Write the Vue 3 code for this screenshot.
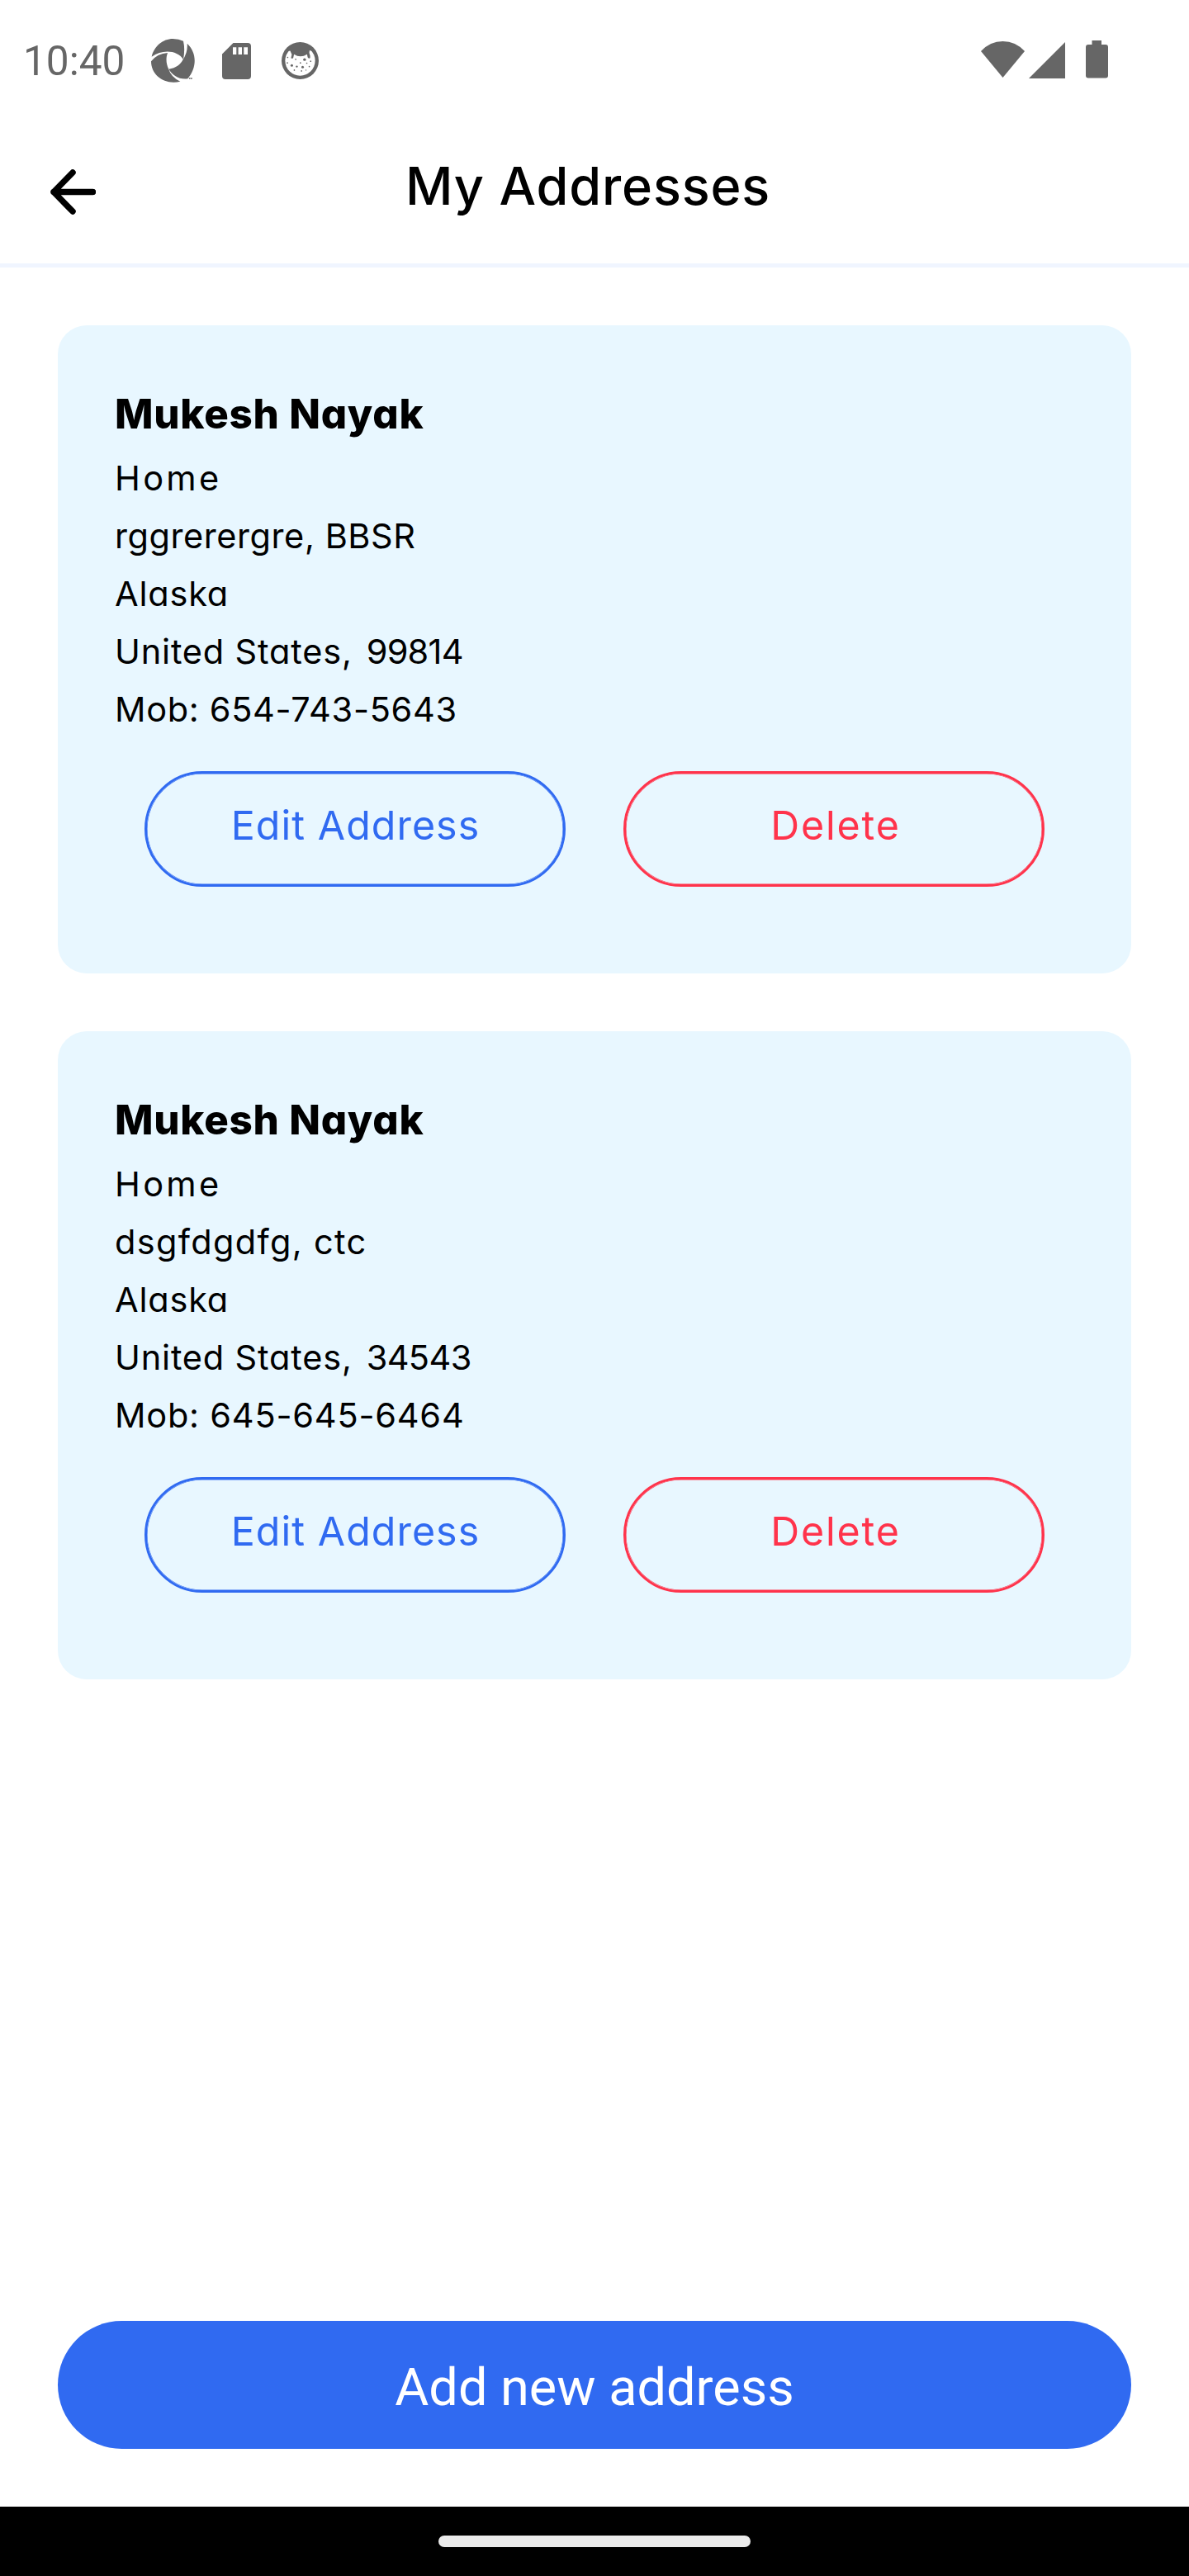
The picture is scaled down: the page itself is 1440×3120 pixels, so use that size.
<script setup>
// Each text carries its own tracking, in pixels.
const addresses = [
  {
    name: 'Mukesh Nayak',
    lines: [
      [{ text: 'Home', track: 3.3 }],
      [{ text: 'rggrerergre, BBSR', track: 0.57 }],
      [{ text: 'Alaska', track: 0.8 }],
      [{ text: 'United States,', track: 0.81 }, { text: '99814', track: -0.77 }],
      [{ text: 'Mob: 654-743-5643', track: 0.67 }]
    ]
  },
  {
    name: 'Mukesh Nayak',
    lines: [
      [{ text: 'Home', track: 3.3 }],
      [{ text: 'dsgfdgdfg, ctc', track: 1.33 }],
      [{ text: 'Alaska', track: 0.8 }],
      [{ text: 'United States,', track: 0.81 }, { text: '34543', track: -0.63 }],
      [{ text: 'Mob: 645-645-6464', track: 0.78 }]
    ]
  }
]
</script>

<template>
  <main class="screen">
    <div class="status">
      <span class="clock">10:40</span>
      <svg class="aperture" viewBox="549 81 159 159">
        <path d="M551 146C560 108 592 81 628 81Q650 81 666 89Q673 118 666 156C645 122 590 118 551 146Z" />
        <path d="M680 98C716 132 716 185 682 226C650 230 625 212 613 191C640 187 655 174 664 158Q683 130 680 98Z" />
        <path d="M549 163Q572 134 609 132C601 155 605 172 612 190Q622 222 655 236C600 250 549 215 549 163Z" />
        <path d="M686 222h5v2h-1.500v4h-2v-4h-1.500zM692 222h2l1 3 1-3h2v6h-1.500v-3l-1 3h-1l-1-3v3h-1.500z" />
      </svg>
      <svg class="sd" viewBox="0 0 35 44">
        <path fill-rule="evenodd" d="M13.500 0H31a4 4 0 0 1 4 4V40a4 4 0 0 1-4 4H4a4 4 0 0 1-4-4V13.500ZM13 5.200V14H17.300V5.200ZM19.600 5.200V14H24V5.200ZM26.300 5.200V14H31V5.200Z" />
      </svg>
      <svg class="cat" viewBox="1024 93 134 134">
        <circle cx="1091" cy="160" r="67" />
        <circle cx="1091" cy="160" r="54" fill="#fff" />
        <path d="M1046 126Q1060 100 1091 100T1136 126L1125 123Q1122 130 1127 142L1127 150Q1121 154 1118 147L1116 137Q1092 152 1069 137L1066 150Q1062 154 1058 150L1061 138 1055 124Z" />
        <circle cx="1107" cy="156" r="5" />
        <circle cx="1061" cy="177" r="4.500" />
        <circle cx="1100" cy="183" r="4.500" />
        <circle cx="1079" cy="181" r="3.500" />
        <circle cx="1075" cy="155" r="2.500" />
        <circle cx="1046" cy="148" r="2.500" />
        <circle cx="1045" cy="168" r="2.500" />
        <circle cx="1092" cy="168" r="2.500" />
        <circle cx="1115" cy="169" r="2.500" />
        <circle cx="1129" cy="162" r="2.500" />
        <circle cx="1124" cy="181" r="2.500" />
        <circle cx="1070" cy="194" r="2.500" />
        <circle cx="1096" cy="197" r="2.500" />
        <circle cx="1112" cy="194" r="2" />
      </svg>
      <svg class="wifi" viewBox="0 0 53 44"><path d="M26.500 44L0 12Q11 0 26.500 0T53 12Z" /></svg>
      <svg class="signal" viewBox="0 0 44 44"><path d="M0 44L44 0V44Z" /></svg>
      <svg class="battery" viewBox="0 0 27 46">
        <path d="M7.500 0H19V5H24a3 3 0 0 1 3 3V42.500a3 3 0 0 1-3 3H3a3 3 0 0 1-3-3V8a3 3 0 0 1 3-3H7.500Z" />
      </svg>
    </div>

    <header class="header">
      <svg class="back" viewBox="0 0 55 55"><path d="M27 4L4 27.500L27 51M4 27.500H51.500" /></svg>
      <h1 class="title">My Addresses</h1>
    </header>

    <section class="list">
      <article v-for="(address, i) in addresses" :key="i" class="card">
        <h2 class="name">{{ address.name }}</h2>
        <p v-for="(line, j) in address.lines" :key="j" class="line">
          <span v-for="part in line" :key="part.text" :style="{ letterSpacing: part.track + 'px' }">{{ part.text }}</span>
        </p>
        <div class="actions">
          <button class="edit">Edit Address</button>
          <button class="delete">Delete</button>
        </div>
      </article>
    </section>

    <footer class="footer"><button class="add">Add new address</button></footer>
    <div class="nav"><span class="handle"></span></div>
  </main>
</template>

<style>
body { background: #fff; }
</style>

<style scoped>
.screen {
  box-sizing: border-box;
  width: 1440px;
  height: 3120px;
  display: flex;
  flex-direction: column;
  background: #fff;
  color: #000;
  font-family: Inter, "Open Sans", sans-serif;
  font-feature-settings: "cv11";
}
.status {
  display: flex;
  align-items: center;
  height: 147px;
  padding: 0 98px 0 28px;
  box-sizing: border-box;
  font-family: Roboto, sans-serif;
  color: #666;
}
.status svg { display: block; fill: #666; flex: none; }
.clock { padding-top: 1px; font-size: 49.5px; line-height: 60px; width: 155px; }
.aperture { width: 53px; height: 53px; }
.sd { width: 35px; height: 44px; margin-left: 33px; }
.cat { width: 45px; height: 45px; margin-left: 37px; }
.wifi { width: 53px; height: 44px; margin: -3px 0 0 auto; }
.signal { width: 44px; height: 44px; margin: -2px 0 0 5px; }
.battery { width: 27px; height: 46px; margin: -3px 0 0 25px; }
.header {
  display: flex;
  align-items: center;
  box-sizing: border-box;
  height: 177px;
  border-bottom: 5px solid #f0f5ff;
  padding: 0 77px 0 61px;
}
.back {
  width: 55px;
  height: 55px;
  margin-top: -2px;
  fill: none;
  stroke: #000;
  stroke-width: 7.5;
  stroke-linecap: round;
  stroke-linejoin: round;
}
.title {
  flex: 1;
  margin: -17px 0 0 -55px;
  text-align: center;
  font-size: 63px;
  line-height: 80px;
  font-weight: 500;
  letter-spacing: 0.85px;
}
.list { display: flex; flex-direction: column; gap: 70px; padding: 70px 70px 0; }
.card { box-sizing: border-box; height: 785px; padding: 70px 69px; border-radius: 35px; background: #e8f7ff; }
.name { margin: 0 0 5px; font-size: 49.3px; line-height: 75px; font-weight: 800; letter-spacing: 0.75px; }
.line { display: flex; gap: 17px; margin: 0; font-size: 41.5px; line-height: 70px; }
.actions { display: flex; gap: 70px; margin: 40px 36px 0; }
button { font-family: inherit; font-feature-settings: inherit; padding: 0; }
.actions button {
  box-sizing: border-box;
  width: 510px;
  height: 140px;
  padding-bottom: 10px;
  border: 3px solid currentColor;
  border-radius: 70px;
  box-shadow: inset 0 0 0 0.5px currentColor;
  background: none;
  font-size: 48.3px;
  letter-spacing: 1.07px;
}
.actions .edit { padding-left: 1px; color: #306af1; }
.actions .delete { padding-left: 4px; color: #ff334b; letter-spacing: 1.88px; }
.footer { margin-top: auto; padding: 0 70px 70px; }
.add {
  display: block;
  width: 100%;
  height: 155px;
  padding-top: 6px;
  border: 0;
  border-radius: 78px;
  background: #306af1;
  color: #fff;
  font: 400 63px Roboto, sans-serif;
}
.nav { display: flex; justify-content: center; height: 84px; flex: none; padding-top: 35px; box-sizing: border-box; background: #000; }
.handle { width: 378px; height: 14px; border-radius: 7px; background: #ebebeb; }
</style>
